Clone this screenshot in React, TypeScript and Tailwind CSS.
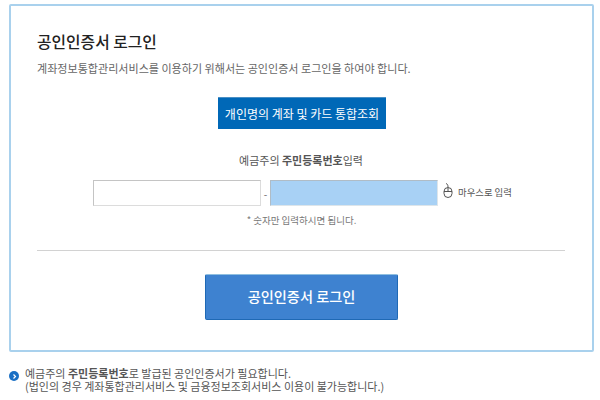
const ko = { fontFamily: '"Noto Sans CJK KR", "Noto Sans", sans-serif' };

function MouseIcon() {
  return (
    <svg width="10" height="15" viewBox="0 0 10 15" fill="none" stroke="#555" strokeWidth="1" className="shrink-0 mt-[-3px] mb-[3px]">
      <path d="M5 4 C5 2 4.5 1 3 0.5" />
      <rect x="1" y="4.5" width="8" height="10" rx="4" />
      <path d="M1 8.5 H9 M5 4.5 V8.5" />
    </svg>
  );
}

export default function App() {
  return (
    <div className="w-[600px] h-[400px] overflow-hidden bg-white pt-1 pl-[9px]" style={ko}>
      <div className="w-[585px] h-[348px] border-2 border-[#a9d1ed] rounded-[2px] pt-[25px] pl-[26px]">
        <h1 className="text-[15.8px] leading-[22px] font-medium text-[#222]">공인인증서 로그인</h1>
        <p className="mt-[7px] text-[11.05px] leading-[16px] text-[#666]">
          계좌정보통합관리서비스를 이용하기 위해서는 공인인증서 로그인을 하여야 합니다.
        </p>
        <div className="mt-[21px] w-[528px] flex justify-center">
          <button className="w-[168px] h-[32px] bg-[#0068b7] border-t border-t-[#4a8fc4] text-white text-[12px] ml-[2px]">
            개인명의 계좌 및 카드 통합조회
          </button>
        </div>
        <p className="mt-[23px] w-[528px] text-center text-[11px] leading-[16px] text-[#555]">
          예금주의 <b className="font-bold">주민등록번호</b>입력
        </p>
        <div className="mt-[12px] flex items-center pl-[56px]">
          <input className="w-[168px] h-[26px] bg-white border border-[#dcdcdc] border-t-[#c4c4c4] border-l-[#c4c4c4]" />
          <span className="w-[9px] text-center text-[10px] text-[#666]">-</span>
          <input className="w-[168px] h-[26px] bg-[#a8d1f5] border border-[#dde5ea] border-t-[#b0bcc6] border-l-[#b0bcc6]" />
          <span className="ml-[5px] flex items-center gap-[5px] text-[9.4px] text-[#555]">
            <MouseIcon />
            <span className="mt-[-1px]">마우스로 입력</span>
          </span>
        </div>
        <p className="mt-[6px] w-[528px] text-center text-[9.5px] leading-[16px] text-[#777] pl-[1px]">* 숫자만 입력하시면 됩니다.</p>
        <div className="mt-[22px] border-t border-[#d2d2d2] w-[528px]" />
        <div className="mt-[23px] w-[528px] flex justify-center">
          <button className="w-[193px] h-[46px] bg-[#3e82d0] border border-[#1f69b5] border-t-[#8fbfe0] rounded-[2px] text-white text-[14.2px] font-medium ml-[1px]">
            공인인증서 로그인
          </button>
        </div>
      </div>
      <div className="mt-[15px] flex items-start gap-[6px] text-[11px] leading-[13px] text-[#555]">
        <span className="mt-[4px] w-[10px] h-[10px] rounded-full bg-[#1a6fc4] flex items-center justify-center shrink-0">
          <svg width="5" height="5" viewBox="0 0 5 5" fill="none" stroke="#fff" strokeWidth="1.2"><path d="M1.5 0.5 L3.5 2.5 L1.5 4.5" /></svg>
        </span>
        <div>
          <p>예금주의 <b className="font-bold">주민등록번호</b>로 발급된 공인인증서가 필요합니다.</p>
          <p>(법인의 경우 계좌통합관리서비스 및 금융정보조회서비스 이용이 불가능합니다.)</p>
        </div>
      </div>
    </div>
  );
}
